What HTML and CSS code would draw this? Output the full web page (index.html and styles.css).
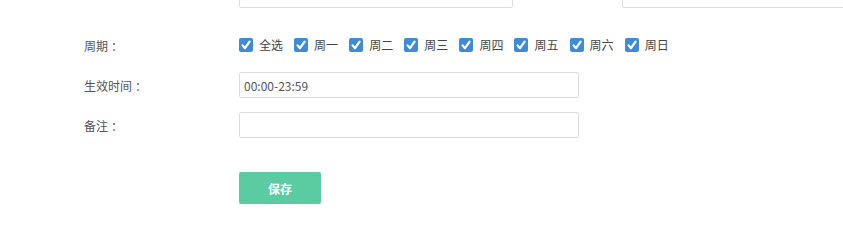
FILE: index.html
```html
<!DOCTYPE html>
<html lang="zh-CN">
<head>
<meta charset="utf-8">
<title>周期设置</title>
<link rel="stylesheet" href="styles.css">
</head>
<body>
<div class="form">
  <div class="row row-top">
    <div class="label"></div>
    <input class="input input-short" type="text">
    <input class="input input-far" type="text">
  </div>
  <div class="row row-period">
    <div class="label">周期<span class="colon">：</span></div>
    <div class="checks">
      <label class="check"><span class="box"><svg viewBox="0 0 14 14" width="14" height="14"><path d="M3.6 7.4 L6 10.2 L10.6 3.6" fill="none" stroke="#fff" stroke-width="2.2" stroke-linecap="round" stroke-linejoin="round"/></svg></span><span class="txt">全选</span></label>
      <label class="check"><span class="box"><svg viewBox="0 0 14 14" width="14" height="14"><path d="M3.6 7.4 L6 10.2 L10.6 3.6" fill="none" stroke="#fff" stroke-width="2.2" stroke-linecap="round" stroke-linejoin="round"/></svg></span><span class="txt">周一</span></label>
      <label class="check"><span class="box"><svg viewBox="0 0 14 14" width="14" height="14"><path d="M3.6 7.4 L6 10.2 L10.6 3.6" fill="none" stroke="#fff" stroke-width="2.2" stroke-linecap="round" stroke-linejoin="round"/></svg></span><span class="txt">周二</span></label>
      <label class="check"><span class="box"><svg viewBox="0 0 14 14" width="14" height="14"><path d="M3.6 7.4 L6 10.2 L10.6 3.6" fill="none" stroke="#fff" stroke-width="2.2" stroke-linecap="round" stroke-linejoin="round"/></svg></span><span class="txt">周三</span></label>
      <label class="check"><span class="box"><svg viewBox="0 0 14 14" width="14" height="14"><path d="M3.6 7.4 L6 10.2 L10.6 3.6" fill="none" stroke="#fff" stroke-width="2.2" stroke-linecap="round" stroke-linejoin="round"/></svg></span><span class="txt">周四</span></label>
      <label class="check"><span class="box"><svg viewBox="0 0 14 14" width="14" height="14"><path d="M3.6 7.4 L6 10.2 L10.6 3.6" fill="none" stroke="#fff" stroke-width="2.2" stroke-linecap="round" stroke-linejoin="round"/></svg></span><span class="txt">周五</span></label>
      <label class="check"><span class="box"><svg viewBox="0 0 14 14" width="14" height="14"><path d="M3.6 7.4 L6 10.2 L10.6 3.6" fill="none" stroke="#fff" stroke-width="2.2" stroke-linecap="round" stroke-linejoin="round"/></svg></span><span class="txt">周六</span></label>
      <label class="check"><span class="box"><svg viewBox="0 0 14 14" width="14" height="14"><path d="M3.6 7.4 L6 10.2 L10.6 3.6" fill="none" stroke="#fff" stroke-width="2.2" stroke-linecap="round" stroke-linejoin="round"/></svg></span><span class="txt">周日</span></label>
    </div>
  </div>
  <div class="row">
    <div class="label">生效时间<span class="colon">：</span></div>
    <input class="input input-long" type="text" value="00:00-23:59">
  </div>
  <div class="row">
    <div class="label">备注<span class="colon">：</span></div>
    <input class="input input-long" type="text">
  </div>
  <div class="row row-btn">
    <div class="label"></div>
    <button class="btn" type="button">保存</button>
  </div>
</div>
</body>
</html>
```
FILE: styles.css
```css
html, body {
  margin: 0;
  padding: 0;
  background: #fff;
  overflow: hidden;
}
body {
  width: 843px;
  height: 207px;
  font-family: "Noto Sans CJK SC", "Noto Sans", sans-serif;
  font-size: 12px;
  color: #555;
}
.form {
  margin-top: -18px;
  padding-left: 84px;
}
.row {
  display: flex;
  align-items: center;
  height: 26px;
  margin-bottom: 14px;
}
.row-top {
  margin-bottom: 24px;
}
.row-btn {
  height: 32px;
  margin-top: 34px;
  margin-bottom: 0;
}
.label {
  width: 155px;
  flex: none;
  color: #555;
  line-height: 16px;
  padding-top: 2px;
}
.colon {
  display: inline-block;
  margin-left: 3px;
}
.input {
  box-sizing: border-box;
  height: 26px;
  border: 1px solid #dcdcdc;
  border-radius: 2px;
  padding: 0 4px;
  font-family: "Noto Sans CJK SC", "Noto Sans", sans-serif;
  font-size: 12px;
  color: #555;
  background: #fff;
  outline: none;
  flex: none;
}
.input-short {
  width: 274px;
}
.input-far {
  width: 274px;
  margin-left: 109px;
}
.input-long {
  width: 340px;
}
.checks {
  display: flex;
  align-items: center;
}
.check {
  display: flex;
  align-items: center;
  width: 55.1px;
  flex: none;
}
.box {
  width: 14px;
  height: 14px;
  border-radius: 2px;
  background: #3f8bd7;
  display: block;
  flex: none;
}
.box svg {
  display: block;
}
.txt {
  margin-left: 6px;
  color: #444;
  line-height: 16px;
}
.btn {
  width: 82px;
  height: 32px;
  border: none;
  border-radius: 2px;
  background: #5bcca1;
  color: #fff;
  font-family: "Noto Sans CJK SC", "Noto Sans", sans-serif;
  font-size: 12px;
  font-weight: bold;
  padding: 0;
  cursor: pointer;
}
```
